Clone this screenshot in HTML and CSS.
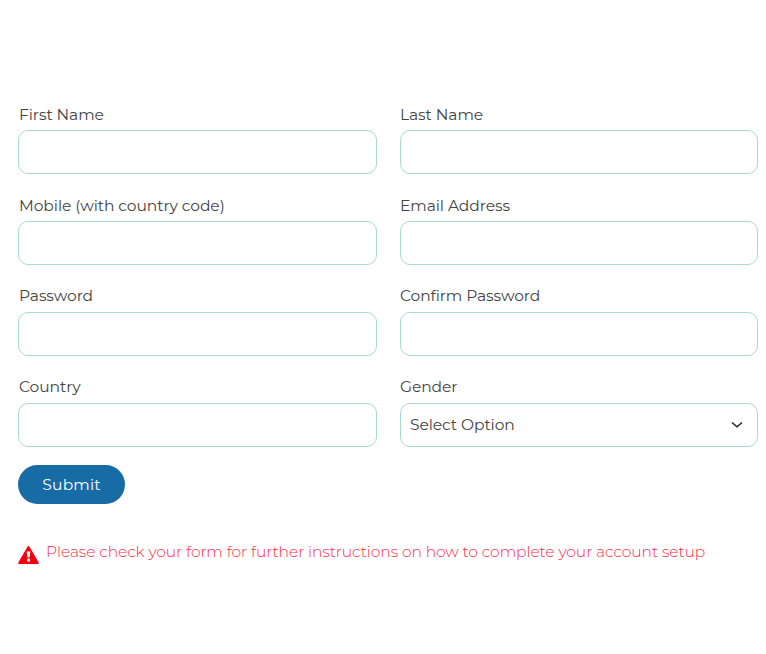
FILE: index.html
```
<!DOCTYPE html>
<html lang="en">
<head>
  <meta charset="UTF-8">
  <title>Create Account</title>
  <link rel="stylesheet" href="styles.css">
</head>
<body>
<form class="signup-form">
  <div class="form-grid">
    <div class="field">
      <label for="firstName">First Name</label>
      <input type="text" id="firstName">
    </div>
    <div class="field">
      <label for="lastName">Last Name</label>
      <input type="text" id="lastName">
    </div>
    <div class="field">
      <label for="mobile">Mobile (with country code)</label>
      <input type="tel" id="mobile">
    </div>
    <div class="field">
      <label for="email">Email Address</label>
      <input type="email" id="email">
    </div>
    <div class="field">
      <label for="password">Password</label>
      <input type="password" id="password">
    </div>
    <div class="field">
      <label for="confirmPassword">Confirm Password</label>
      <input type="password" id="confirmPassword">
    </div>
    <div class="field">
      <label for="country">Country</label>
      <input type="text" id="country">
    </div>
    <div class="field">
      <label for="gender">Gender</label>
      <div class="select-wrap">
        <select id="gender">
          <option>Select Option</option>
          <option>Female</option>
          <option>Male</option>
        </select>
        <svg class="chevron" width="12" height="8" viewBox="0 0 12 8">
          <path d="M1 1.5 6 5.8 11 1.5" fill="none" stroke="#222" stroke-width="1.5"/>
        </svg>
      </div>
    </div>
  </div>
  <button type="submit">Submit</button>
  <div class="form-error">
    <svg class="warning" width="21" height="18" viewBox="0 0 21 18">
      <path d="M10.5 1 19.8 17H1.2Z" fill="#f5000f" stroke="#f5000f" stroke-width="2" stroke-linejoin="round"/>
      <path d="M8.7 5.5h3.6l-.6 5.8H9.3Z" fill="#fff"/>
      <circle cx="10.5" cy="14" r="1.7" fill="#fff"/>
    </svg>
    <span>Please check your form for further instructions on how to complete your account setup</span>
  </div>
</form>
</body>
</html>
```
FILE: styles.css
```
* {
  box-sizing: border-box;
}
body {
  margin: 0;
  background: #fff;
  color: #444;
  font-family: Montserrat, Inter, sans-serif;
  font-size: 15.5px;
  font-weight: 400;
  letter-spacing: -0.08px;
}
.signup-form {
  padding: 105px 8px 0 18px;
}
.form-grid {
  display: grid;
  grid-template-columns: 359px 358px;
  column-gap: 23px;
}
.field {
  height: 91px;
}
label {
  display: block;
  height: 25px;
  padding-left: 1px;
  line-height: 20px;
  white-space: nowrap;
}
.field:nth-child(even) label {
  padding-left: 0;
}
.field:nth-child(n+5) label {
  margin-top: -1px;
  height: 26px;
}
input, select {
  display: block;
  width: 100%;
  height: 44px;
  margin: 0;
  padding: 0 9px;
  border: 1px solid #a9d9cf;
  border-radius: 10px;
  background: #fff;
  color: inherit;
  font: inherit;
  letter-spacing: inherit;
  outline: none;
}
select {
  padding-bottom: 2px;
  appearance: none;
}
.select-wrap {
  position: relative;
}
.chevron {
  position: absolute;
  top: 18px;
  right: 15px;
  pointer-events: none;
}
button {
  display: block;
  width: 107px;
  height: 39px;
  margin-top: -4px;
  padding: 0;
  border: none;
  border-radius: 20px;
  background: #176ca5;
  color: #fff;
  font: inherit;
  letter-spacing: 0.2px;
  cursor: pointer;
}
.form-error {
  display: flex;
  gap: 7px;
  margin-top: 38px;
  color: #fb2c46;
  font-weight: 300;
  line-height: 20px;
  white-space: nowrap;
}
.warning {
  flex: none;
  margin-top: 4px;
}
```
